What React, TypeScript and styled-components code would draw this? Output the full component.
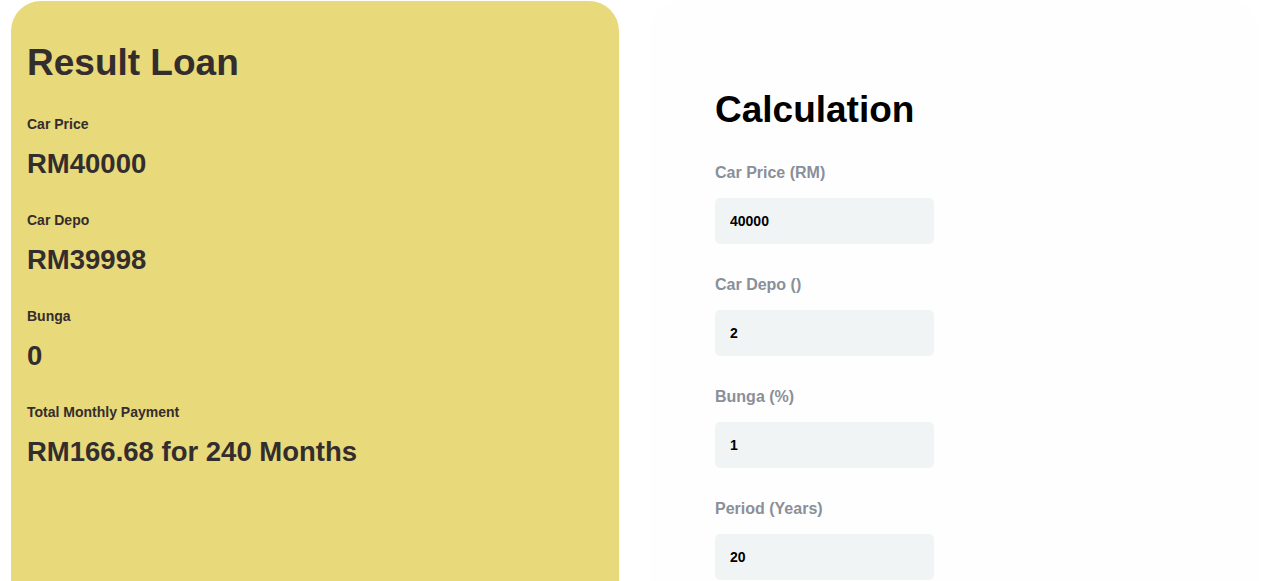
import React from "react";
import styled, { createGlobalStyle } from "styled-components";

const Global = createGlobalStyle`
  html, body { margin: 0; padding: 0; background: #ffffff; }
  body { font-family: "Liberation Sans", Arial, sans-serif; }
  * { box-sizing: border-box; }
`;

const Page = styled.div`
  display: flex;
  gap: 31px;
  padding: 1px 3px 0 11px;
`;

const ResultPanel = styled.section`
  width: 608px;
  min-height: 640px;
  background: #e8d97b;
  border-radius: 30px 30px 0 0;
  padding: 40px 16px 0 16px;
  color: #332d2d;
`;

const FormPanel = styled.section`
  width: 608px;
  min-height: 640px;
  margin-top: -1px;
  background: #fefeff;
  border-radius: 30px 30px 0 0;
  padding: 88px 0 0 65px;
  color: #000;
`;

const Heading = styled.h1`
  margin: 0;
  font-size: 37px;
  line-height: 43px;
  font-weight: 700;
`;

const ResultList = styled.div`
  display: flex;
  flex-direction: column;
  margin-top: 32px;
`;

const ResultItem = styled.div`
  display: flex;
  flex-direction: column;
  gap: 15.5px;
  margin-bottom: 33.5px;
`;

const ResultLabel = styled.div`
  font-size: 14px;
  line-height: 16px;
  font-weight: 700;
`;

const ResultValue = styled.div`
  font-size: 27.5px;
  line-height: 31px;
  font-weight: 700;
`;

const Fields = styled.div`
  display: flex;
  flex-direction: column;
  margin-top: 32.5px;
  width: 219px;
`;

const Field = styled.label`
  display: flex;
  flex-direction: column;
  gap: 16.5px;
  margin-bottom: 31.5px;
`;

const FieldLabel = styled.span`
  font-size: 16px;
  line-height: 18px;
  font-weight: 700;
  color: #8a8f98;
`;

const Input = styled.input`
  width: 219px;
  height: 46px;
  border: none;
  outline: none;
  border-radius: 5px;
  background: #f1f4f5;
  padding: 0 15px;
  font-family: "Liberation Sans", Arial, sans-serif;
  font-size: 14px;
  font-weight: 700;
  color: #000;
`;

const results = [
  { label: "Car Price", value: "RM40000" },
  { label: "Car Depo", value: "RM39998" },
  { label: "Bunga", value: "0" },
  { label: "Total Monthly Payment", value: "RM166.68 for 240 Months" },
];

const fields = [
  { label: "Car Price (RM)", value: "40000" },
  { label: "Car Depo ()", value: "2" },
  { label: "Bunga (%)", value: "1" },
  { label: "Period (Years)", value: "20" },
];

export default function App() {
  return (
    <>
      <Global />
      <Page>
        <ResultPanel>
          <Heading>Result Loan</Heading>
          <ResultList>
            {results.map((r) => (
              <ResultItem key={r.label}>
                <ResultLabel>{r.label}</ResultLabel>
                <ResultValue>{r.value}</ResultValue>
              </ResultItem>
            ))}
          </ResultList>
        </ResultPanel>
        <FormPanel>
          <Heading>Calculation</Heading>
          <Fields>
            {fields.map((f) => (
              <Field key={f.label}>
                <FieldLabel>{f.label}</FieldLabel>
                <Input type="text" defaultValue={f.value} />
              </Field>
            ))}
          </Fields>
        </FormPanel>
      </Page>
    </>
  );
}
